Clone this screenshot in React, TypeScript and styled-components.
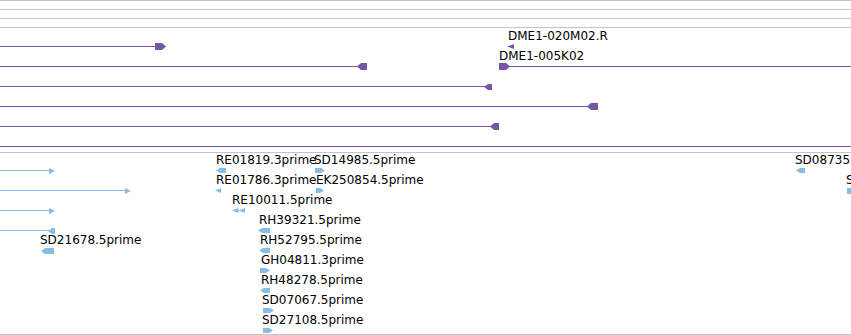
import React from 'react';
import styled, {createGlobalStyle} from "styled-components"

type Dir = 'left' | 'right' | 'tri-left' | 'tri-right' | 'double-left' | 'box'

interface Feature {
    y: number,
    line?: [number, number],
    glyph?: { x: number, w: number, h: number, dir: Dir },
    label?: string,
    labelX?: number
}

interface TrackData {
    height: number,
    color: string,
    features: Feature[]
}

const GlobalStyle = createGlobalStyle`
  html, body {
    margin: 0;
    padding: 0;
    background: #ffffff;
  }
  body {
    font-family: "DejaVu Sans", "Liberation Sans", sans-serif;
    font-size: 12px;
    color: #000;
  }
`

const Panel = styled.div`
  width: 851px;
  height: 335px;
  display: flex;
  flex-direction: column;
  overflow: hidden;
`

const Spacer = styled.div`
  height: 8px;
  border-top: 1px solid #c4c4c4;
  flex-shrink: 0;
`

const TrackBox = styled.div<{ $height: number, $last?: boolean }>`
  position: relative;
  height: ${p => p.$height}px;
  border-top: 1px solid #c4c4c4;
  border-bottom: ${p => p.$last ? '1px solid #c4c4c4' : 'none'};
  overflow: hidden;
  flex-shrink: 0;
`

const Line = styled.div<{ $color: string }>`
  position: absolute;
  height: 1px;
  background: ${p => p.$color};
`

const Label = styled.span`
  position: absolute;
  line-height: 12px;
  white-space: nowrap;
  letter-spacing: 0;
`

const GlyphSvg = styled.svg`
  position: absolute;
  display: block;
`

const purple = "#7654a8"
const blue = "#88bce3"

const points = (w: number, h: number, dir: Dir) => {
    const t = Math.min(4, w)
    switch (dir) {
        case 'left':
            return `0,${h / 2} ${t},0 ${w},0 ${w},${h} ${t},${h}`
        case 'right':
            return `0,0 ${w - t},0 ${w},${h / 2} ${w - t},${h} 0,${h}`
        case 'tri-left':
            return `0,${h / 2} ${w},0 ${w},${h}`
        case 'tri-right':
            return `0,0 ${w},${h / 2} 0,${h}`
        case 'double-left': {
            const m = w / 2
            return `0,${h / 2} ${m},0 ${m},${h / 2} ${w},0 ${w},${h} ${m},${h / 2} ${m},${h}`
        }
        default:
            return `0,0 ${w},0 ${w},${h} 0,${h}`
    }
}

const Glyph = ({x, y, w, h, dir, color}: { x: number, y: number, w: number, h: number, dir: Dir, color: string }) => (
    <GlyphSvg width={w} height={h} viewBox={`0 0 ${w} ${h}`} style={{left: x, top: y - h / 2 + 0.5}}>
        <polygon points={points(w, h, dir)} fill={color}/>
    </GlyphSvg>
)

const tracks: TrackData[] = [
    {
        height: 124,
        color: purple,
        features: [
            {y: 18, line: [0, 157], glyph: {x: 155, w: 11, h: 7, dir: 'right'}},
            {y: 18, label: "DME1-020M02.R", labelX: 508, glyph: {x: 507, w: 7, h: 5, dir: 'tri-left'}},
            {y: 38, line: [0, 360], glyph: {x: 357, w: 10, h: 7, dir: 'left'}},
            {y: 38, label: "DME1-005K02", labelX: 499, line: [505, 851], glyph: {x: 499, w: 11, h: 7, dir: 'right'}},
            {y: 58, line: [0, 486], glyph: {x: 484, w: 8, h: 6, dir: 'left'}},
            {y: 78, line: [0, 590], glyph: {x: 587, w: 11, h: 7, dir: 'left'}},
            {y: 98, line: [0, 492], glyph: {x: 490, w: 9, h: 7, dir: 'left'}},
            {y: 118, line: [0, 851]},
        ]
    },
    {
        height: 181,
        color: blue,
        features: [
            {y: 17, line: [0, 52], glyph: {x: 49, w: 6, h: 6, dir: 'tri-right'}},
            {y: 17, label: "RE01819.3prime", labelX: 216, glyph: {x: 216, w: 10, h: 5, dir: 'left'}},
            {y: 17, label: "SD14985.5prime", labelX: 314, glyph: {x: 315, w: 10, h: 5, dir: 'right'}},
            {y: 17, label: "SD08735", labelX: 795, glyph: {x: 796, w: 9, h: 5, dir: 'left'}},
            {y: 37, line: [0, 127], glyph: {x: 125, w: 6, h: 6, dir: 'tri-right'}},
            {y: 37, label: "RE01786.3prime", labelX: 216, glyph: {x: 215, w: 6, h: 5, dir: 'tri-left'}},
            {y: 37, label: "EK250854.5prime", labelX: 316, glyph: {x: 316, w: 8, h: 5, dir: 'right'}},
            {y: 37, label: "S", labelX: 846, glyph: {x: 847, w: 6, h: 6, dir: 'box'}},
            {y: 57, line: [0, 52], glyph: {x: 49, w: 6, h: 6, dir: 'tri-right'}},
            {y: 57, label: "RE10011.5prime", labelX: 232, glyph: {x: 232, w: 13, h: 5, dir: 'double-left'}},
            {y: 77, line: [0, 50], glyph: {x: 48, w: 7, h: 6, dir: 'left'}},
            {y: 77, label: "RH39321.5prime", labelX: 259, glyph: {x: 258, w: 12, h: 5, dir: 'left'}},
            {y: 97, label: "SD21678.5prime", labelX: 40, glyph: {x: 41, w: 13, h: 6, dir: 'left'}},
            {y: 97, label: "RH52795.5prime", labelX: 260, glyph: {x: 259, w: 11, h: 5, dir: 'left'}},
            {y: 117, label: "GH04811.3prime", labelX: 261, glyph: {x: 260, w: 10, h: 5, dir: 'right'}},
            {y: 137, label: "RH48278.5prime", labelX: 261, glyph: {x: 260, w: 10, h: 5, dir: 'left'}},
            {y: 157, label: "SD07067.5prime", labelX: 262, glyph: {x: 263, w: 11, h: 5, dir: 'right'}},
            {y: 177, label: "SD27108.5prime", labelX: 262, glyph: {x: 263, w: 10, h: 5, dir: 'right'}},
        ]
    }
]

const Track = ({data, last}: { data: TrackData, last?: boolean }) => (
    <TrackBox $height={data.height} $last={last}>
        {data.features.map((f, i) => (
            <React.Fragment key={i}>
                {f.line && <Line $color={data.color} style={{left: f.line[0], width: f.line[1] - f.line[0], top: f.y}}/>}
                {f.label && <Label style={{left: f.labelX, top: f.y - 16}}>{f.label}</Label>}
                {f.glyph && <Glyph {...f.glyph} y={f.y} color={data.color}/>}
            </React.Fragment>
        ))}
    </TrackBox>
)

const App = () => (
    <>
        <GlobalStyle/>
        <Panel>
            <Spacer/>
            <Spacer/>
            <Spacer/>
            <Track data={tracks[0]}/>
            <Track data={tracks[1]} last/>
        </Panel>
    </>
);

export default App;
